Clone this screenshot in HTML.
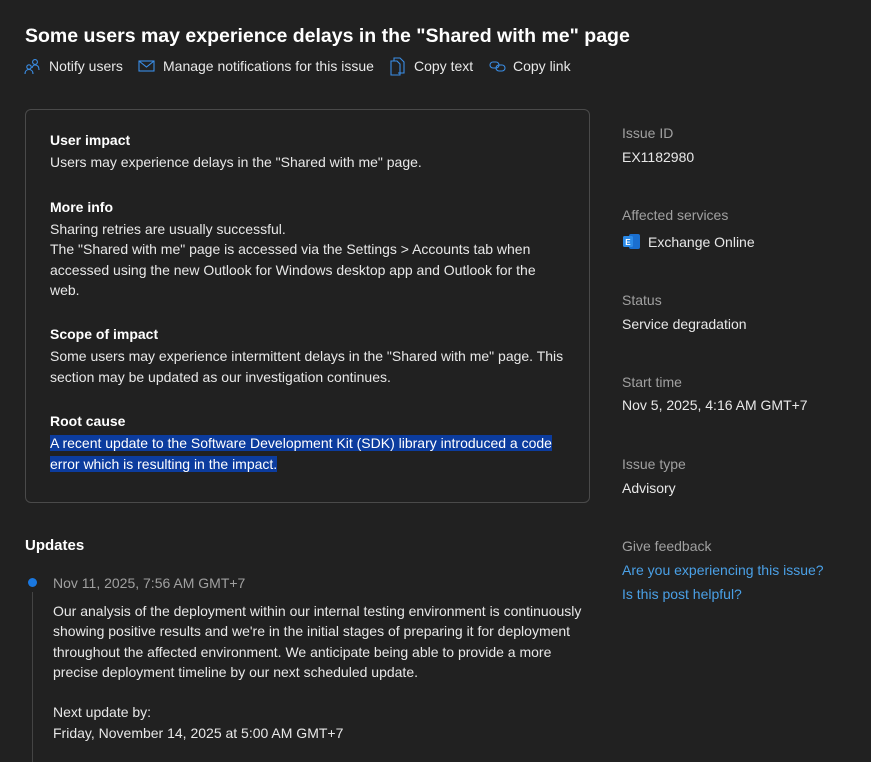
<!DOCTYPE html>
<html><head><meta charset="utf-8"><style>
*{margin:0;padding:0;box-sizing:border-box}
body{width:871px;height:757px;background:#212121;color:#e8e8e8;font-family:"Liberation Sans",sans-serif;font-size:14px;position:relative;overflow:hidden}
.a{position:absolute;white-space:nowrap;line-height:20px}
.b{font-weight:bold;color:#fff}
.g{color:#a0a0a0}
.l{color:#4aa0e6}
.card{position:absolute;left:25px;top:109px;width:565px;height:394px;border:1px solid #4a4a4a;border-radius:6px}
.sel{background:#0c3c9e;color:#fff}
</style></head><body>
<div class="a b" style="left:25px;top:24px;font-size:19.5px;line-height:24px">Some users may experience delays in the "Shared with me" page</div>
<svg class="a" style="left:24px;top:58px" width="18" height="18" viewBox="0 0 18 18" fill="none" stroke="#3a8ee6" stroke-width="1.1"><circle cx="5" cy="9" r="2.2"/><path d="M1 16c0-3 1.8-4.5 4-4.5S9 13 9 16"/><circle cx="11" cy="4" r="2.4"/><path d="M8 10c.6-2 1.8-3 3-3 2.5 0 4 1.8 4 5"/></svg>
<div class="a" style="left:49px;top:56px">Notify users</div>
<svg class="a" style="left:138px;top:60px" width="18" height="13" viewBox="0 0 18 13" fill="none" stroke="#3a8ee6" stroke-width="1.1"><rect x="1" y="1" width="15" height="10"/><path d="M1 1l7.5 6L16 1"/></svg>
<div class="a" style="left:163px;top:56px">Manage notifications for this issue</div>
<svg class="a" style="left:390px;top:57px" width="16" height="19" viewBox="0 0 16 19" fill="none" stroke="#3a8ee6" stroke-width="1.1"><path d="M4 4V1h6l4 4v11H8"/><path d="M1 4h6l3 3v11H1z"/></svg>
<div class="a" style="left:414px;top:56px">Copy text</div>
<svg class="a" style="left:489px;top:60px" width="18" height="13" viewBox="0 0 18 13" fill="none" stroke="#3a8ee6" stroke-width="1.1"><rect x="1" y="2" width="9" height="6" rx="3"/><rect x="7" y="5" width="9" height="6" rx="3"/></svg>
<div class="a" style="left:513px;top:56px">Copy link</div>

<div class="card"></div>
<div class="a b" style="left:50px;top:130px">User impact</div>
<div class="a" style="left:50px;top:152px">Users may experience delays in the "Shared with me" page.</div>
<div class="a b" style="left:50px;top:197px">More info</div>
<div class="a" style="left:50px;top:219px;line-height:20.4px">Sharing retries are usually successful.<br>The "Shared with me" page is accessed via the Settings &gt; Accounts tab when<br>accessed using the new Outlook for Windows desktop app and Outlook for the<br>web.</div>
<div class="a b" style="left:50px;top:324px">Scope of impact</div>
<div class="a" style="left:50px;top:346px;line-height:21px">Some users may experience intermittent delays in the "Shared with me" page. This<br>section may be updated as our investigation continues.</div>
<div class="a b" style="left:50px;top:411px">Root cause</div>
<div class="a" style="left:50px;top:433px;line-height:21px"><span class="sel">A recent update to the Software Development Kit (SDK) library introduced a code</span><br><span class="sel">error which is resulting in the impact.</span></div>

<div class="a g" style="left:622px;top:123px">Issue ID</div>
<div class="a" style="left:622px;top:147px">EX1182980</div>
<div class="a g" style="left:622px;top:205px">Affected services</div>
<svg class="a" style="left:622px;top:233px" width="19" height="17" viewBox="0 0 19 17"><rect x="7" y="1" width="11" height="15" rx="2" fill="#1a6fd0"/><rect x="1" y="3" width="10" height="11" rx="1.5" fill="#2c8be8"/><text x="3.3" y="12" font-size="8" font-weight="bold" fill="#fff" font-family="Liberation Sans">E</text></svg>
<div class="a" style="left:648px;top:232px">Exchange Online</div>
<div class="a g" style="left:622px;top:290px">Status</div>
<div class="a" style="left:622px;top:314px">Service degradation</div>
<div class="a g" style="left:622px;top:372px">Start time</div>
<div class="a" style="left:622px;top:395px">Nov 5, 2025, 4:16 AM GMT+7</div>
<div class="a g" style="left:622px;top:454px">Issue type</div>
<div class="a" style="left:622px;top:478px">Advisory</div>
<div class="a g" style="left:622px;top:536px">Give feedback</div>
<div class="a l" style="left:622px;top:560px">Are you experiencing this issue?</div>
<div class="a l" style="left:622px;top:584px">Is this post helpful?</div>

<div class="a b" style="left:25px;top:536px;font-size:15px">Updates</div>
<div style="position:absolute;left:28px;top:578px;width:9px;height:9px;border-radius:50%;background:#1a78e0"></div>
<div style="position:absolute;left:32px;top:592px;width:1px;height:170px;background:#444"></div>
<div class="a g" style="left:53px;top:573px">Nov 11, 2025, 7:56 AM GMT+7</div>
<div class="a" style="left:53px;top:601px;line-height:20.3px">Our analysis of the deployment within our internal testing environment is continuously<br>showing positive results and we're in the initial stages of preparing it for deployment<br>throughout the affected environment. We anticipate being able to provide a more<br>precise deployment timeline by our next scheduled update.<br><br>Next update by:<br>Friday, November 14, 2025 at 5:00 AM GMT+7</div>
</body></html>
